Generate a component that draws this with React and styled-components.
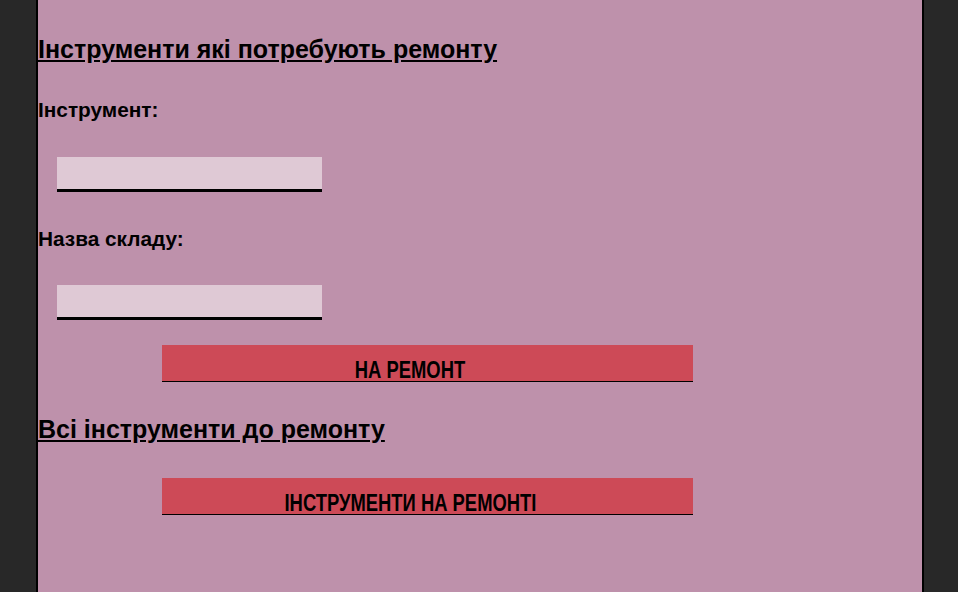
import React from "react";
import styled, { createGlobalStyle } from "styled-components";

const Global = createGlobalStyle`
  html, body { margin: 0; padding: 0; background: #282828; }
  body { font-family: "Liberation Sans", Arial, sans-serif; color: #000; }
  * { box-sizing: border-box; }
`;

const Panel = styled.main`
  margin: 0 34px 0 36px;
  min-height: 592px;
  background: #be91ab;
  border-left: 2px solid #000;
  border-right: 2px solid #000;
  padding: 1px 0 40px 0;
  display: flex;
  flex-direction: column;
  align-items: flex-start;
`;

const Heading = styled.h2`
  margin: ${(p) => p.$top}px 0 0 0;
  font-size: 25px;
  line-height: 28px;
  font-weight: 700;
  text-decoration: underline;
`;

const Label = styled.label`
  display: block;
  margin-top: ${(p) => p.$top}px;
  font-size: 20.8px;
  line-height: 23px;
  font-weight: 700;
`;

const Input = styled.input`
  display: block;
  margin: ${(p) => p.$top}px 0 0 19px;
  width: 265px;
  height: 35px;
  background: #dfc9d5;
  border: none;
  border-bottom: 3px solid #000;
  outline: none;
  padding: 0 8px;
  font-family: inherit;
  font-size: 16px;
`;

const Button = styled.button`
  display: block;
  margin: ${(p) => p.$top}px 0 0 124px;
  width: 531px;
  height: 37px;
  padding: 13px 35px 0 0;
  background: #cd4a57;
  border: none;
  border-bottom: 1px solid #000;
  font-family: "Liberation Sans", Arial, sans-serif;
  font-weight: 700;
  font-size: 23px;
  line-height: 25px;
  text-align: center;
  color: #000;
  overflow: visible;
  white-space: nowrap;
  cursor: pointer;
`;

const Narrow = styled.span`
  display: inline-block;
  transform: scaleX(0.8);
  transform-origin: center;
`;

export default function App() {
  return (
    <>
      <Global />
      <Panel>
        <Heading $top={34}>Інструменти які потребують ремонту</Heading>
        <Label $top={35}>Інструмент:</Label>
        <Input $top={36} />
        <Label $top={35}>Назва складу:</Label>
        <Input $top={35} />
        <Button $top={25}>
          <Narrow>НА РЕМОНТ</Narrow>
        </Button>
        <Heading $top={33}>Всі інструменти до ремонту</Heading>
        <Button $top={35}>
          <Narrow>ІНСТРУМЕНТИ НА РЕМОНТІ</Narrow>
        </Button>
      </Panel>
    </>
  );
}
